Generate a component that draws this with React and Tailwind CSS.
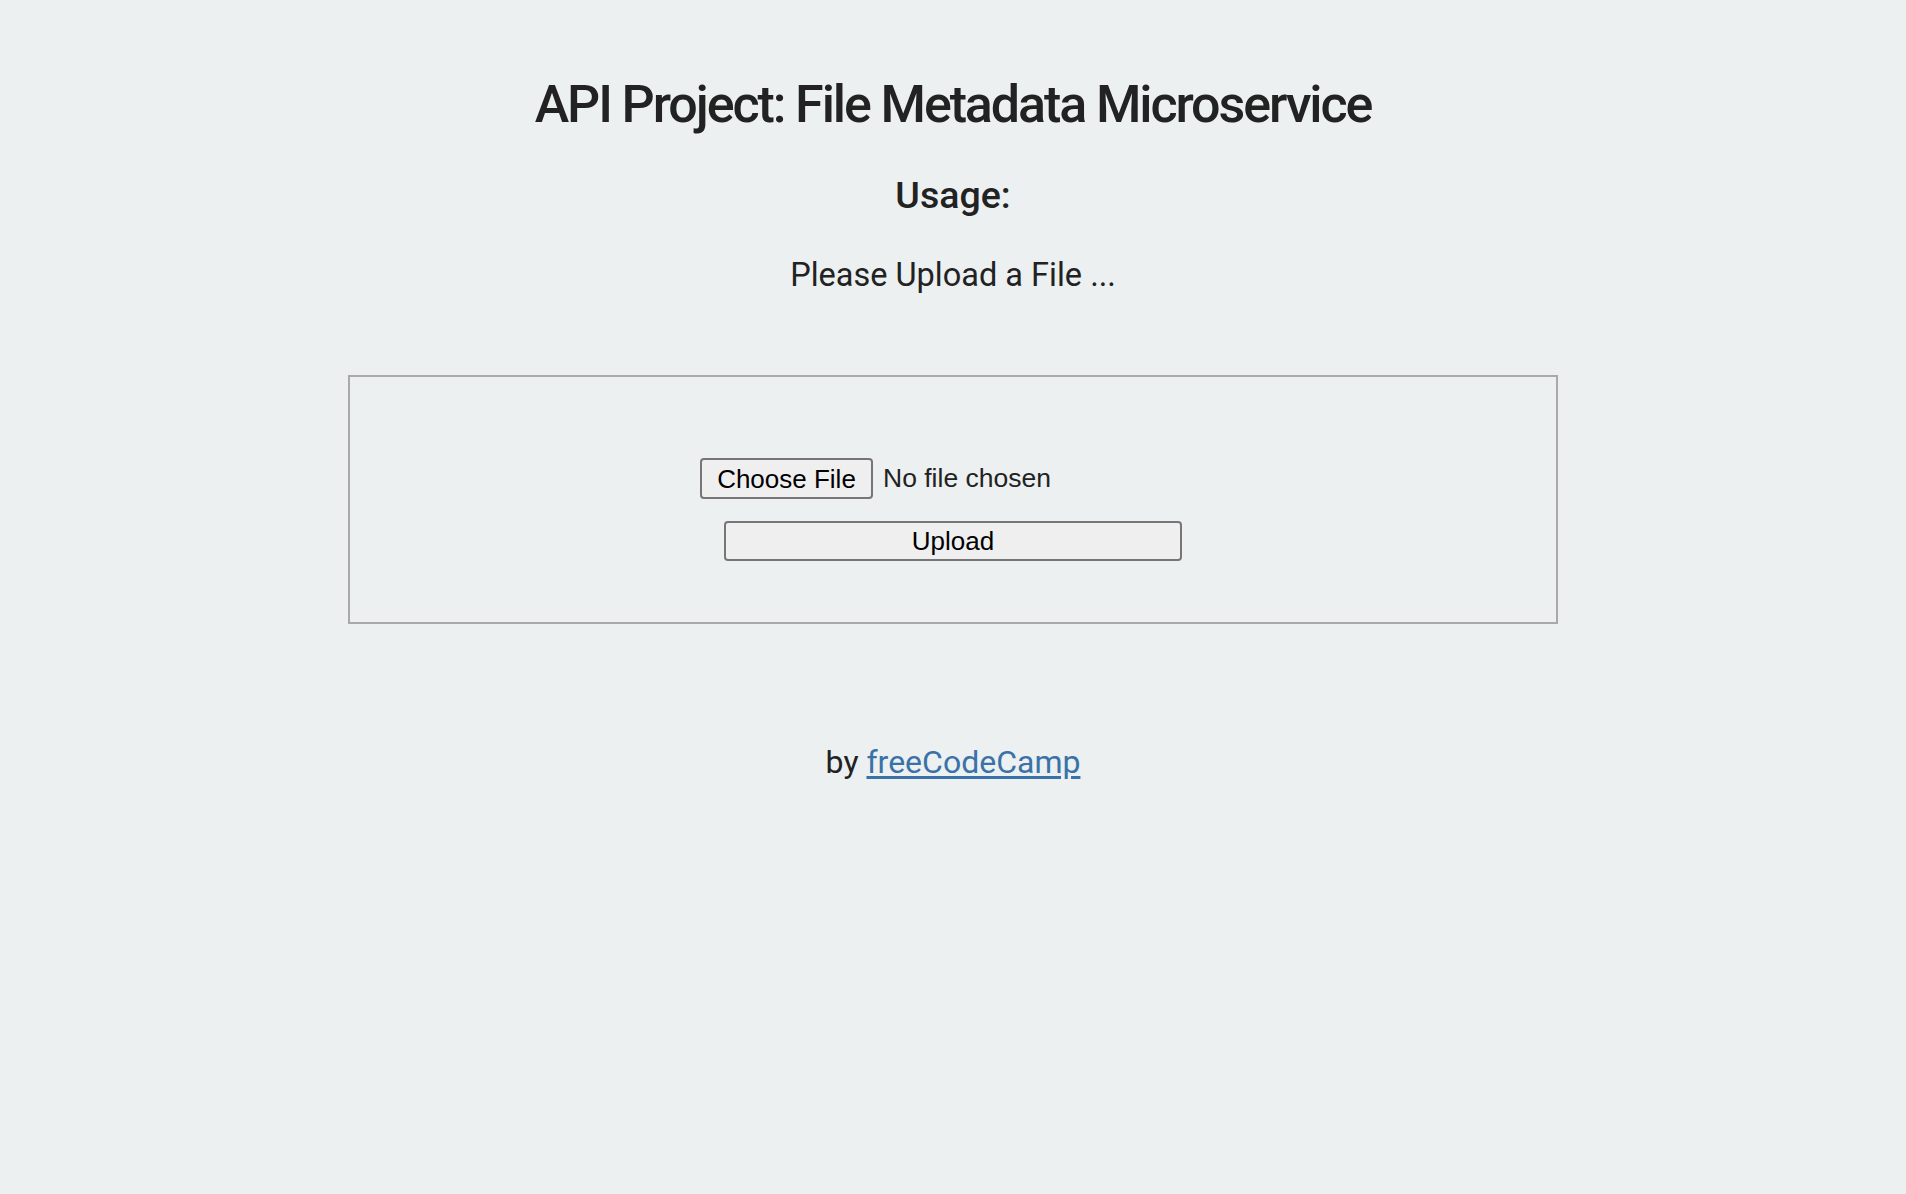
export default function App() {
  return (
    <div className="min-h-screen bg-[#ecf0f1] text-[#222] text-center font-['Roboto',sans-serif]">
      <div className="pt-[75px]">
        <h1 className="text-[52px] leading-[60px] font-medium tracking-[-2.1px]">
          API Project: File Metadata Microservice
        </h1>
        <h3 className="mt-[38px] text-[37.5px] leading-[44px] font-medium">Usage:</h3>
        <p className="mt-[39px] text-[32.5px] leading-[38px]">Please Upload a File ...</p>
      </div>

      {/* upload form */}
      <div className="mx-auto mt-[81px] w-[1210px] border-2 border-[#a9a9a9] pt-[81px] pb-[61px]">
        <form className="flex flex-col items-center font-['Liberation_Sans',Arial,sans-serif] text-[26px]">
          <div className="flex w-[506px] items-center">
            <button
              type="button"
              className="h-[41px] w-[173px] rounded-[4px] border-2 border-[#767676] bg-[#efefef] leading-none text-black"
            >
              Choose File
            </button>
            <span className="ml-[10px] text-[26.5px] text-[#222]">No file chosen</span>
          </div>
          <button
            type="button"
            className="mt-[22px] h-[40px] w-[458px] rounded-[4px] border-2 border-[#767676] bg-[#efefef] leading-none text-black"
          >
            Upload
          </button>
        </form>
      </div>

      <footer className="mt-[119px] text-[32px] leading-[38px]">
        by{' '}
        <a href="#" className="text-[#3a72a8] underline underline-offset-[3px]">
          freeCodeCamp
        </a>
      </footer>
    </div>
  )
}
